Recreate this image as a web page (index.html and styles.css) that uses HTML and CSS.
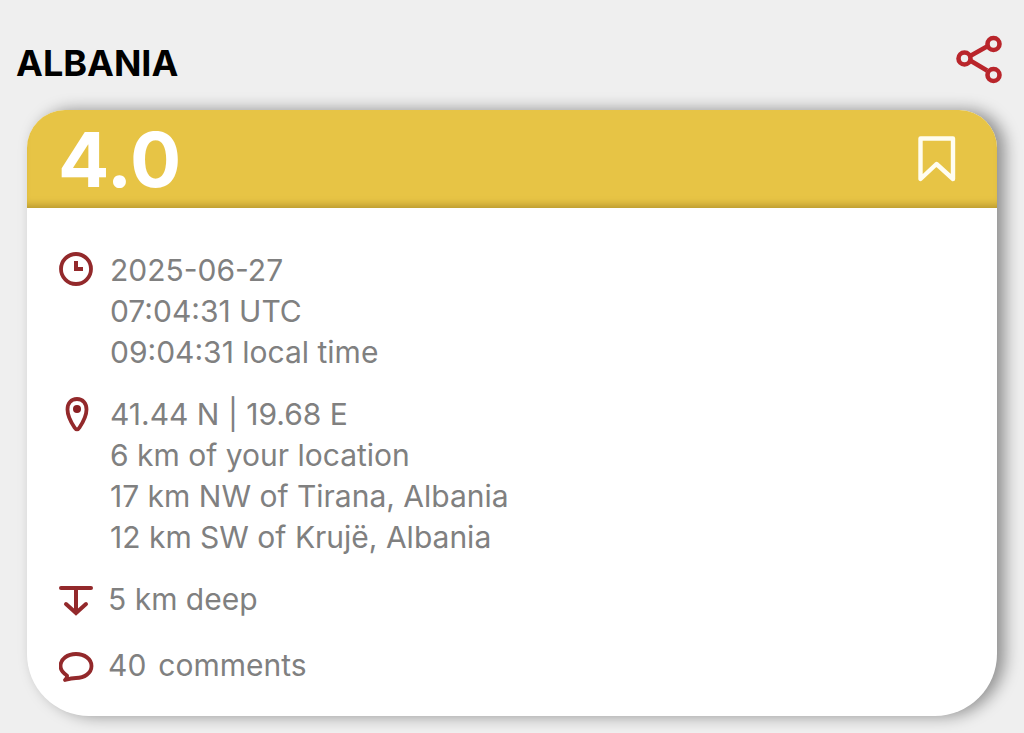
FILE: index.html
```html
<!DOCTYPE html>
<html lang="en">
<head>
  <meta charset="UTF-8">
  <meta name="viewport" content="width=device-width, initial-scale=1.0">
  <title>Albania - 4.0</title>
  <link rel="stylesheet" href="styles.css">
</head>
<body>
  <header class="top-bar">
    <h1 class="region">ALBANIA</h1>
    <button type="button" class="icon-button" aria-label="Share">
      <svg width="48" height="50" viewBox="0 0 48 50" fill="none" stroke="#b9252b" stroke-width="4.600">
        <path d="M15 20.500 31 11.500M15 26 31 35.500"/>
        <circle cx="8.500" cy="23.500" r="6"/>
        <circle cx="37.500" cy="9" r="6"/>
        <circle cx="37.500" cy="40" r="6"/>
      </svg>
    </button>
  </header>

  <main class="card">
    <div class="card-header">
      <div class="magnitude">4.0</div>
      <button type="button" class="icon-button" aria-label="Bookmark">
        <svg width="40" height="48" viewBox="0 0 40 48" fill="none" stroke="#fffdf0" stroke-width="4.400" stroke-linejoin="round">
          <path d="M3.500 3.500H36V44L19.500 29 3.500 44Z"/>
        </svg>
      </button>
    </div>

    <div class="card-body">
      <section class="row">
        <svg class="row-icon" width="36" height="40" viewBox="0 0 36 40" fill="none" stroke="#93292b">
          <circle cx="17" cy="19" r="15" stroke-width="3.800"/>
          <path d="M17 11V19H24" stroke-width="4"/>
        </svg>
        <div class="row-text">
          <div>2025-06-27</div>
          <div>07:04:31 UTC</div>
          <div>09:04:31 local time</div>
        </div>
      </section>

      <section class="row">
        <svg class="row-icon" width="36" height="40" viewBox="0 0 36 40" fill="none" stroke="#93292b">
          <path d="M18 5C12 5 8.500 9.500 8.500 15.500 8.500 22 12.500 29 15.500 33.500 17 36 19 36 20.500 33.500 23.500 29 27.500 22 27.500 15.500 27.500 9.500 24 5 18 5Z" stroke-width="3.800"/>
          <circle cx="18" cy="15" r="4" fill="#8a2023" stroke="none"/>
        </svg>
        <div class="row-text">
          <div>41.44 N | 19.68 E</div>
          <div>6 km of your location</div>
          <div>17 km NW of Tirana, Albania</div>
          <div>12 km SW of Krujë, Albania</div>
        </div>
      </section>

      <section class="row small">
        <svg class="row-icon" width="36" height="40" viewBox="0 0 36 40" fill="none" stroke="#93292b" stroke-width="4" stroke-linecap="round">
          <path d="M2 9H32"/>
          <path d="M17 9V32M7 25 17 34 27 25"/>
        </svg>
        <div class="row-text">5 km deep</div>
      </section>

      <section class="row small comments">
        <svg class="row-icon" width="36" height="40" viewBox="0 0 36 40" fill="none" stroke="#93292b" stroke-width="3.800" stroke-linejoin="round">
          <path d="M8 30.500C4 28 1.500 25 1.500 21 1.500 14 8.500 9 17 9S32.500 14 32.500 21 25.500 33 17 33C14 33 11 33.500 6 35 7.500 33.500 8.500 32.500 8 30.500Z"/>
        </svg>
        <div class="row-text count">
          <span>40</span>
          <span>comments</span>
        </div>
      </section>
    </div>
  </main>
</body>
</html>
```

FILE: styles.css
```css
body {
  margin: 0;
  background-color: #efefef;
  font-family: Inter, "Liberation Sans", sans-serif;
  color: #808080;
}

.top-bar {
  display: flex;
  align-items: center;
  justify-content: space-between;
  padding: 35px 20px 25px 16px;
}

.region {
  margin: 6px 0 0;
  font-size: 36px;
  line-height: 40px;
  font-weight: 700;
  color: #000;
}

.icon-button {
  display: block;
  padding: 0;
  border: none;
  background: none;
  cursor: pointer;
}

.icon-button svg,
.row-icon {
  display: block;
}

.card {
  margin: 0 27px 16px;
  border-radius: 38px 38px 62px 62px;
  background-color: #fff;
  box-shadow: 8px 0 16px rgba(0, 0, 0, 0.4);
}

.card-header {
  display: flex;
  align-items: center;
  justify-content: space-between;
  height: 98px;
  padding: 0 40px 0 31px;
  box-sizing: border-box;
  border-radius: 38px 38px 0 0;
  background-color: #e7c445;
  box-shadow: inset 0 -8px 8px -6px rgba(90, 65, 0, 0.4);
}

.magnitude {
  font-size: 76px;
  line-height: 98px;
  font-weight: 700;
  color: #fff;
}

.card-body {
  display: flex;
  flex-direction: column;
  gap: 21px;
  padding: 42px 32px 30px;
}

.row {
  display: flex;
  gap: 15px;
  font-size: 30px;
  line-height: 41px;
}

.row-icon {
  flex: none;
}

.small {
  gap: 13px;
}

.comments {
  padding-top: 4px;
}

.count {
  display: flex;
  gap: 12px;
}
```
